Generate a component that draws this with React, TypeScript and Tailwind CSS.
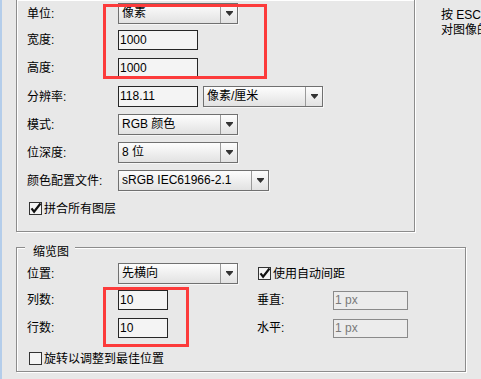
import React from "react";

const Arrow = () => (
  <svg width="7" height="5" viewBox="0 0 7 5" aria-hidden="true">
    <path d="M0 0h7v1L3.5 5 0 1z" fill="#333" />
  </svg>
);

const Select = ({ value, className }: { value: string; className: string }) => (
  <div
    className={`flex h-[21px] border border-[#707070] bg-linear-to-b from-[#fdfdfd] to-[#e2e2e2] shadow-[1px_1px_0_#f6f6f6] ${className}`}>
    <span className="flex-1 overflow-hidden whitespace-nowrap pl-[3px] leading-[19px]">{value}</span>
    <span className="flex w-[17px] items-center justify-center border-l border-[#9a9a9a]">
      <Arrow />
    </span>
  </div>
);

const Field = ({
  value,
  className,
  disabled,
}: {
  value: string;
  className: string;
  disabled?: boolean;
}) => (
  <div
    className={`border pl-[1px] ${
      disabled
        ? "border-[#8a8a8a] bg-[#ececec] text-[#7a7a7a] leading-[17px]"
        : "border-[#262626] bg-[#f4f4f4] leading-[18px]"
    } ${className}`}>
    {value}
  </div>
);

const Check = ({ checked }: { checked?: boolean }) => (
  <svg width="14" height="13" viewBox="0 0 14 13" className="overflow-visible" aria-hidden="true">
    <rect x="0.5" y="0.5" width="12" height="12" fill="#f4f4f4" stroke="#333" />
    {checked && <path d="M2.5 6.3l2.6 3.4L11.5 1.5" stroke="#111" strokeWidth="2.2" fill="none" />}
  </svg>
);

const Label = ({ children, className = "w-[91px]" }: { children: React.ReactNode; className?: string }) => (
  <span className={`shrink-0 ${className}`}>{children}</span>
);

export default function App() {
  return (
    <div className="relative flex h-[379px] w-[481px] overflow-hidden bg-[#e8e8e8] font-['Liberation_Sans','Noto_Sans_CJK_SC',sans-serif] text-[12px] leading-[14px] text-black">
      <div className="w-[2px] shrink-0 bg-[#b4cdea]" />
      <div className="ml-[14px] flex flex-col">
        <div className="flex">
          {/* 图像大小 group */}
          <div className="-mt-px flex h-[233px] w-[399px] shrink-0 flex-col border border-[#8c8c8c] pl-[10px] pt-[3px] shadow-[inset_1px_1px_0_#fff,1px_1px_0_#fff]">
            <div className="flex h-[21px] items-center">
              <Label>单位:</Label>
              <Select value="像素" className="w-[120px]" />
            </div>
            <div className="mt-[6px] flex h-[20px] items-center">
              <Label>宽度:</Label>
              <Field value="1000" className="h-[20px] w-[80px]" />
            </div>
            <div className="mt-[8px] flex h-[20px] items-center">
              <Label>高度:</Label>
              <Field value="1000" className="h-[20px] w-[80px]" />
            </div>
            <div className="mt-[8px] flex h-[21px] items-center">
              <Label>分辨率:</Label>
              <Field value="118.11" className="h-[21px] w-[80px] leading-[19px]" />
              <Select value="像素/厘米" className="ml-[5px] w-[120px]" />
            </div>
            <div className="mt-[7px] flex h-[21px] items-center">
              <Label>模式:</Label>
              <Select value="RGB 颜色" className="w-[120px]" />
            </div>
            <div className="mt-[7px] flex h-[21px] items-center">
              <Label>位深度:</Label>
              <Select value="8 位" className="w-[120px]" />
            </div>
            <div className="mt-[7px] flex h-[21px] items-center">
              <Label>颜色配置文件:</Label>
              <Select value="sRGB IEC61966-2.1" className="w-[151px]" />
            </div>
            <div className="ml-[2px] mt-[11px] flex h-[13px] items-center gap-[1px]">
              <Check checked />
              <span>拼合所有图层</span>
            </div>
          </div>
          <div className="ml-[26px] whitespace-nowrap pt-[8px] leading-[15px]">
            <div>按 ESC</div>
            <div>对图像的</div>
          </div>
        </div>

        {/* 缩览图 group */}
        <div className="relative mt-[15px] flex h-[125px] w-[450px] flex-col border border-[#8c8c8c] pl-[10px] pt-[15px] shadow-[inset_1px_1px_0_#fff,1px_1px_0_#fff]">
          <span className="absolute left-[8px] top-[-3px] bg-[#e8e8e8] pl-[8px] pr-[6px] leading-[14px]">缩览图</span>
          <div className="flex h-[21px] items-center">
            <Label>位置:</Label>
            <div className="w-[139px] shrink-0">
              <Select value="先横向" className="w-[120px]" />
            </div>
            <div className="ml-[1px] flex items-center gap-[1px]">
              <Check checked />
              <span>使用自动间距</span>
            </div>
          </div>
          <div className="mt-[6px] flex h-[20px] items-center">
            <Label>列数:</Label>
            <div className="w-[139px] shrink-0">
              <Field value="10" className="h-[20px] w-[50px]" />
            </div>
            <Label className="w-[76px]">垂直:</Label>
            <Field value="1 px" className="h-[19px] w-[75px]" disabled />
          </div>
          <div className="mt-[8px] flex h-[20px] items-center">
            <Label>行数:</Label>
            <div className="w-[139px] shrink-0">
              <Field value="10" className="h-[20px] w-[50px]" />
            </div>
            <Label className="w-[76px]">水平:</Label>
            <Field value="1 px" className="h-[19px] w-[75px]" disabled />
          </div>
          <div className="ml-[2px] mt-[14px] flex h-[13px] items-center gap-[1px]">
            <Check />
            <span>旋转以调整到最佳位置</span>
          </div>
        </div>
      </div>

      {/* red annotation boxes */}
      <div className="absolute left-[103px] top-[4px] h-[75px] w-[164px] border-[3px] border-[#fc3b3b]" />
      <div className="absolute left-[103px] top-[287px] h-[60px] w-[86px] border-[3px] border-[#fc3b3b]" />
    </div>
  );
}
